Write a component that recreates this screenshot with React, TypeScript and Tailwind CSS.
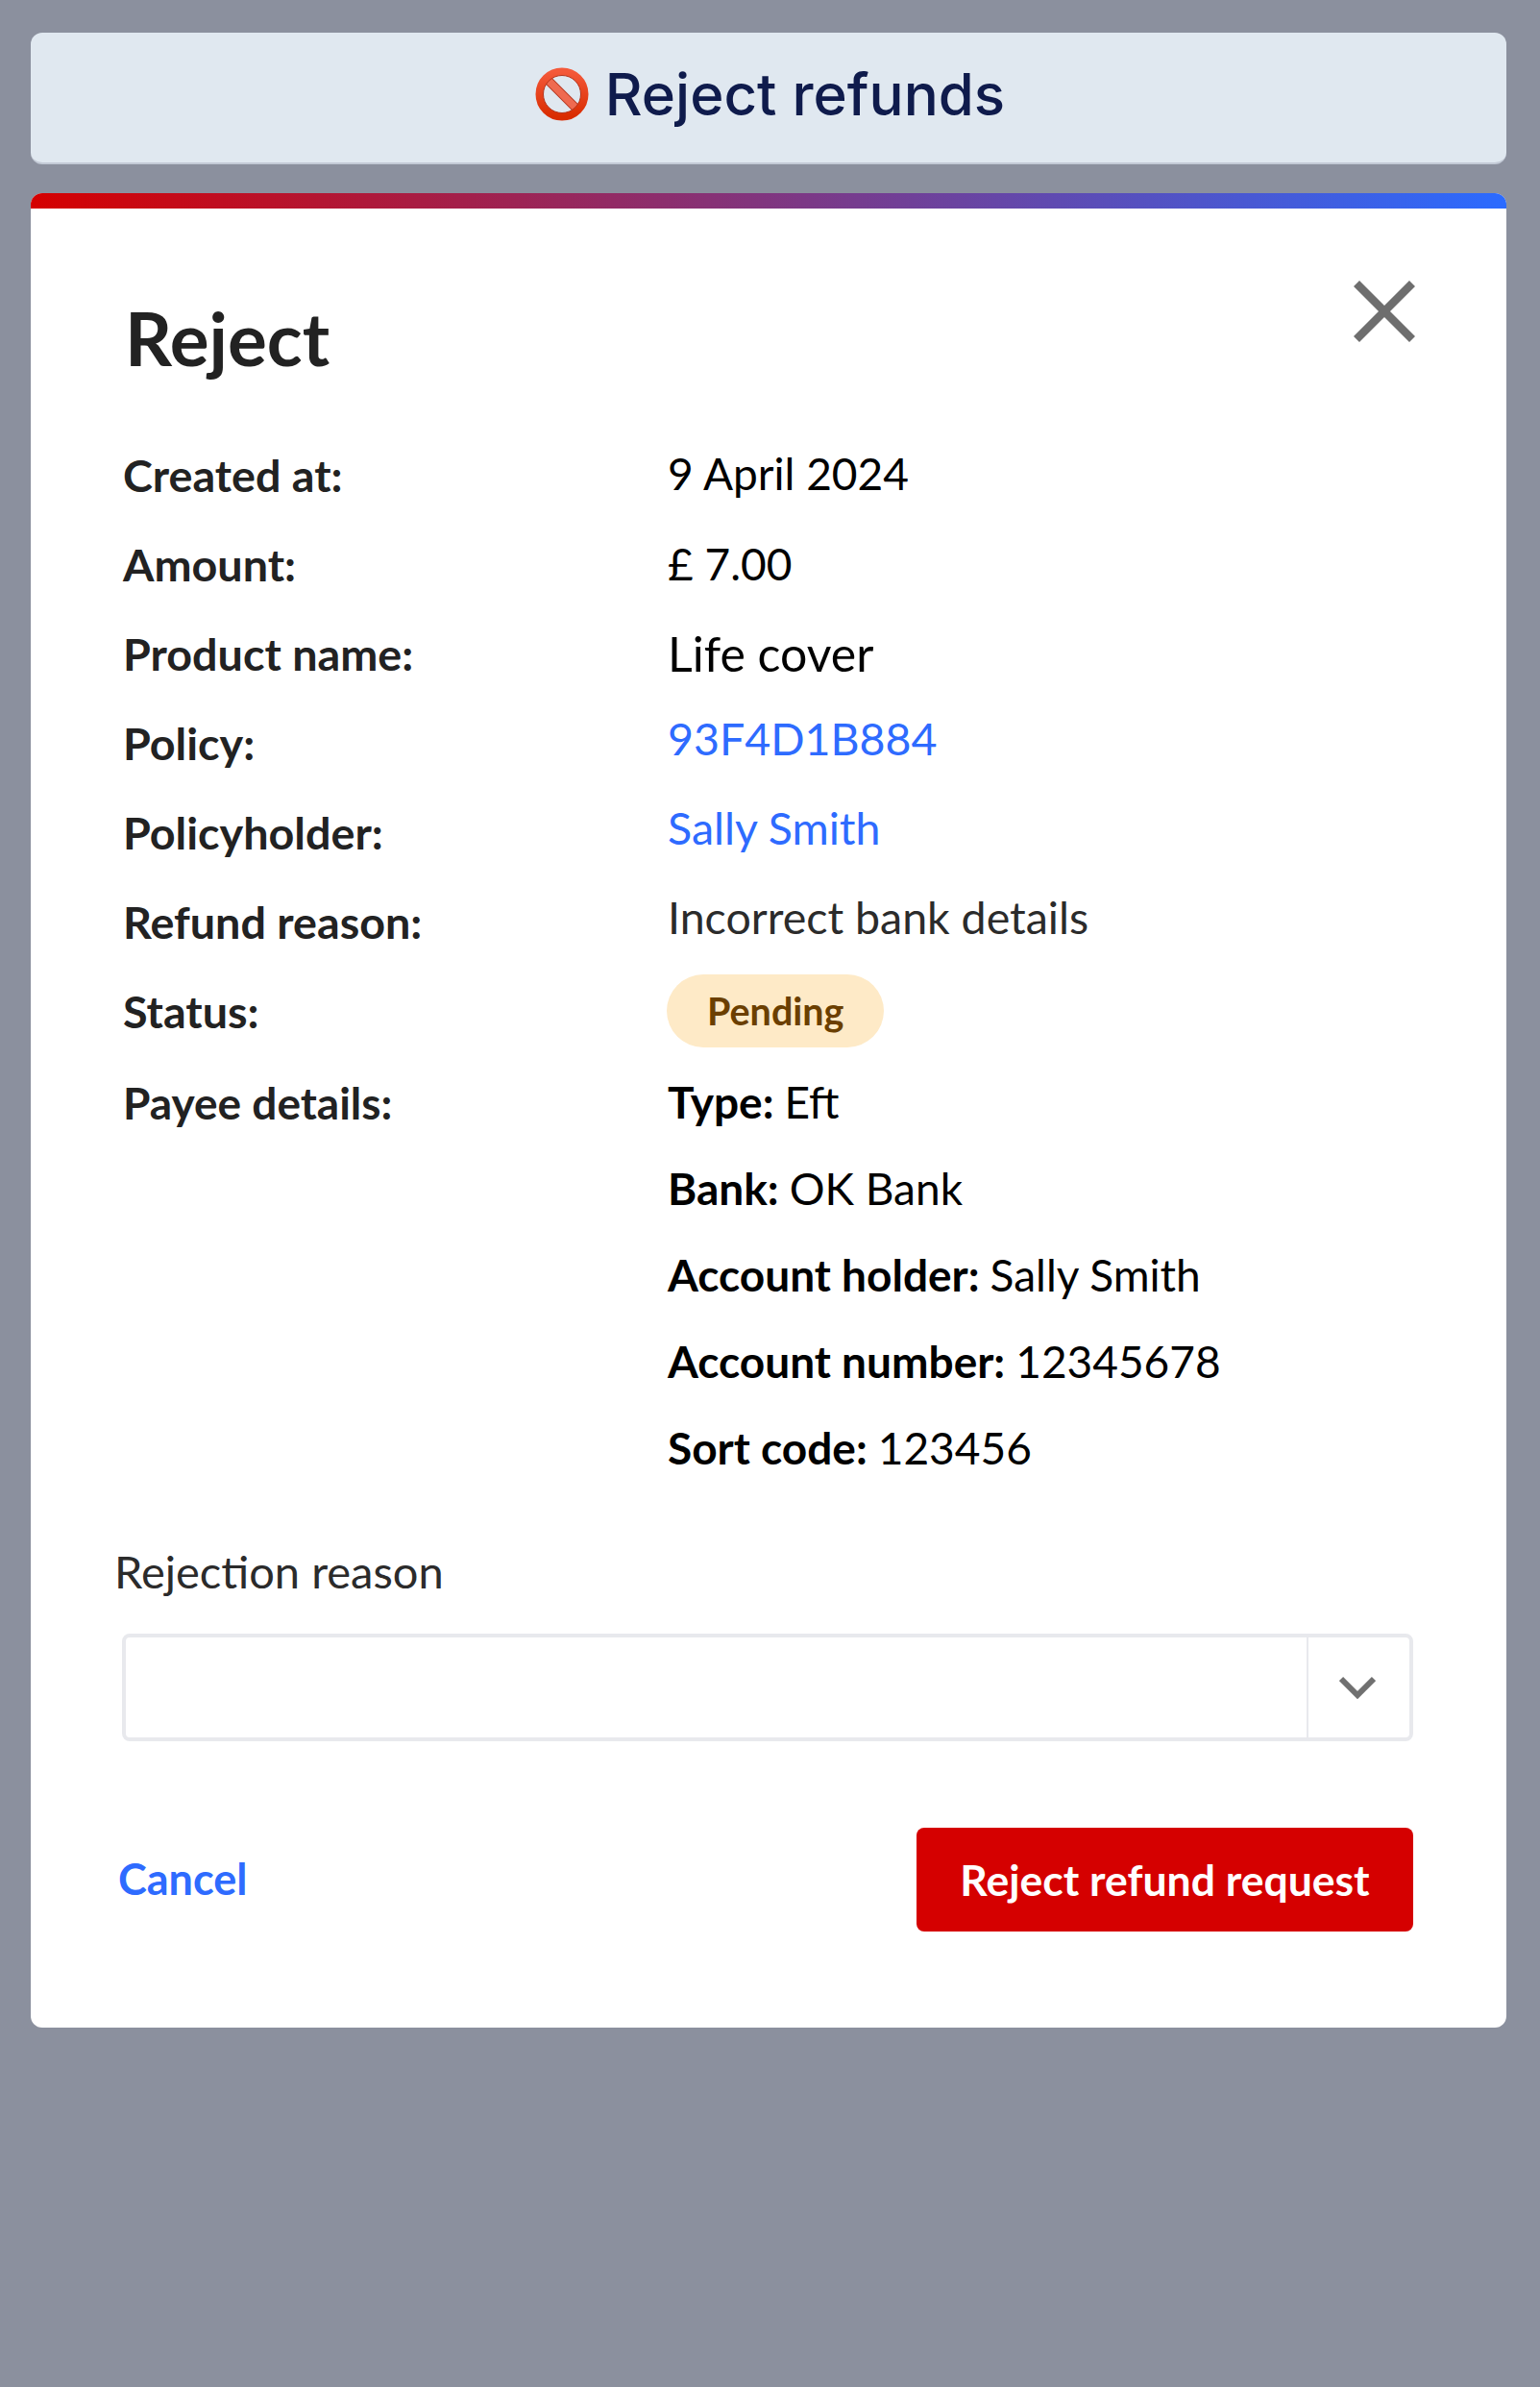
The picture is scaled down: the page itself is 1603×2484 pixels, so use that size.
import React from 'react';

const rows = [
  { label: 'Created at:', value: <span className="text-[46px] text-black -mt-[4px]">9 April 2024</span> },
  { label: 'Amount:', value: <span className="text-[46px] text-black -mt-[3px]">£ 7.00</span> },
  { label: 'Product name:', value: <span className="text-[50px] text-black -mt-[1px]">Life cover</span> },
  { label: 'Policy:', value: <a href="#" className="text-[46.5px] text-[#2e6bff] -mt-[10px]">93F4D1B884</a> },
  { label: 'Policyholder:', value: <a href="#" className="text-[46.5px] text-[#2e6bff] -mt-[10px]">Sally Smith</a> },
  { label: 'Refund reason:', value: <span className="text-[46.5px] text-[#2b2b2b] -mt-[9px]">Incorrect bank details</span> },
  {
    label: 'Status:',
    value: (
      <span className="h-[76px] -mt-[2px] -ml-[1px] rounded-full bg-[#feeac7] px-[42px] flex items-center text-[39.5px] font-bold text-[#6b3f00]">
        Pending
      </span>
    ),
  },
];

const payee = [
  ['Type:', 'Eft'],
  ['Bank:', 'OK Bank'],
  ['Account holder:', 'Sally Smith'],
  ['Account number:', '12345678'],
  ['Sort code:', '123456'],
];

function NoEntry() {
  return (
    <svg viewBox="0 0 56 56" className="w-[56px] h-[56px] shrink-0">
      <defs>
        <linearGradient id="ring" x1="0" y1="0" x2="0" y2="1">
          <stop offset="0" stopColor="#f4593a" />
          <stop offset="1" stopColor="#d92c00" />
        </linearGradient>
      </defs>
      <line x1="12" y1="12" x2="44" y2="44" stroke="#b3341c" strokeWidth="9.5" />
      <line x1="12" y1="12" x2="44" y2="44" stroke="#ef6a50" strokeWidth="7.5" />
      <circle cx="28" cy="28" r="23.5" fill="none" stroke="url(#ring)" strokeWidth="8" />
      <circle cx="28" cy="28" r="19.5" fill="none" stroke="#b3341c" strokeWidth="1" />
    </svg>
  );
}

export default function App() {
  return (
    <div className="min-h-[2484px] bg-[#8b909e] pl-8 pr-[35px] pt-[34px] font-['Lato',sans-serif]">
      <div className="h-[137px] pb-[7px] pl-[3px] rounded-xl bg-[#e0e8f0] border-b-2 border-[#c3cad6] flex items-center justify-center gap-[17px]">
        <NoEntry />
        <h1 className="text-[60px] font-medium text-[#0f1b4c] font-['Inter',sans-serif]">Reject refunds</h1>
      </div>

      <div className="mt-[30px] h-[1909px] rounded-xl bg-white overflow-hidden">
        <div className="h-4 bg-[linear-gradient(to_right,#d50000,#2b6bff)]" />

        <div className="pl-[96px] pr-[95px]">
          <div className="flex justify-between items-start">
            <h2 className="mt-[88px] ml-[2px] text-[76.5px] leading-[92px] font-bold text-[#222222]">Reject</h2>
            <button className="mt-[75px]">
              <svg viewBox="0 0 64 64" className="w-16 h-16 text-[#6e6e6e]" fill="none" stroke="currentColor" strokeWidth="8.5">
                <path d="M3 3 L61 61 M61 3 L3 61" />
              </svg>
            </button>
          </div>

          <div className="mt-[51px]">
            {rows.map((row) => (
              <div key={row.label} className="flex items-center h-[93px]">
                <div className="w-[567px] text-[46.7px] font-bold text-[#222222]">{row.label}</div>
                <div className="flex items-center">{row.value}</div>
              </div>
            ))}
            <div className="flex mt-[3px]">
              <div className="w-[567px] h-[90px] flex items-center text-[46px] font-bold text-[#222222]">Payee details:</div>
              <div className="text-[46px] text-black -mt-[1px]">
                {payee.map(([key, val]) => (
                  <div key={key} className="h-[90px] flex items-center gap-[11px]">
                    <b>{key}</b>
                    <span>{val}</span>
                  </div>
                ))}
              </div>
            </div>
          </div>
        </div>

        <div className="pl-[87px] pr-[97px] mt-[54px]">
          <label className="block text-[47px] text-[#2b2b2b] leading-[60px]">Rejection reason</label>
          <div className="mt-[35px] ml-2 h-[112px] flex rounded-lg border-4 border-[#e8e9ed]">
            <div className="flex-1" />
            <div className="w-[107px] border-l-2 border-[#e8e9ed] flex items-center justify-center pr-[3px]">
              <svg viewBox="0 0 38 24" className="w-[38px] h-6 text-[#707070]" fill="none" stroke="currentColor" strokeWidth="6">
                <path d="M2 3 L19 20 L36 3" />
              </svg>
            </div>
          </div>

          <div className="mt-[90px] flex items-center justify-between">
            <a href="#" className="text-[45px] font-bold text-[#2e6bff] ml-1">Cancel</a>
            <button className="w-[517px] h-[108px] rounded-lg bg-[#d50000] text-white text-[44.5px] font-bold">
              Reject refund request
            </button>
          </div>
        </div>
      </div>
    </div>
  );
}
